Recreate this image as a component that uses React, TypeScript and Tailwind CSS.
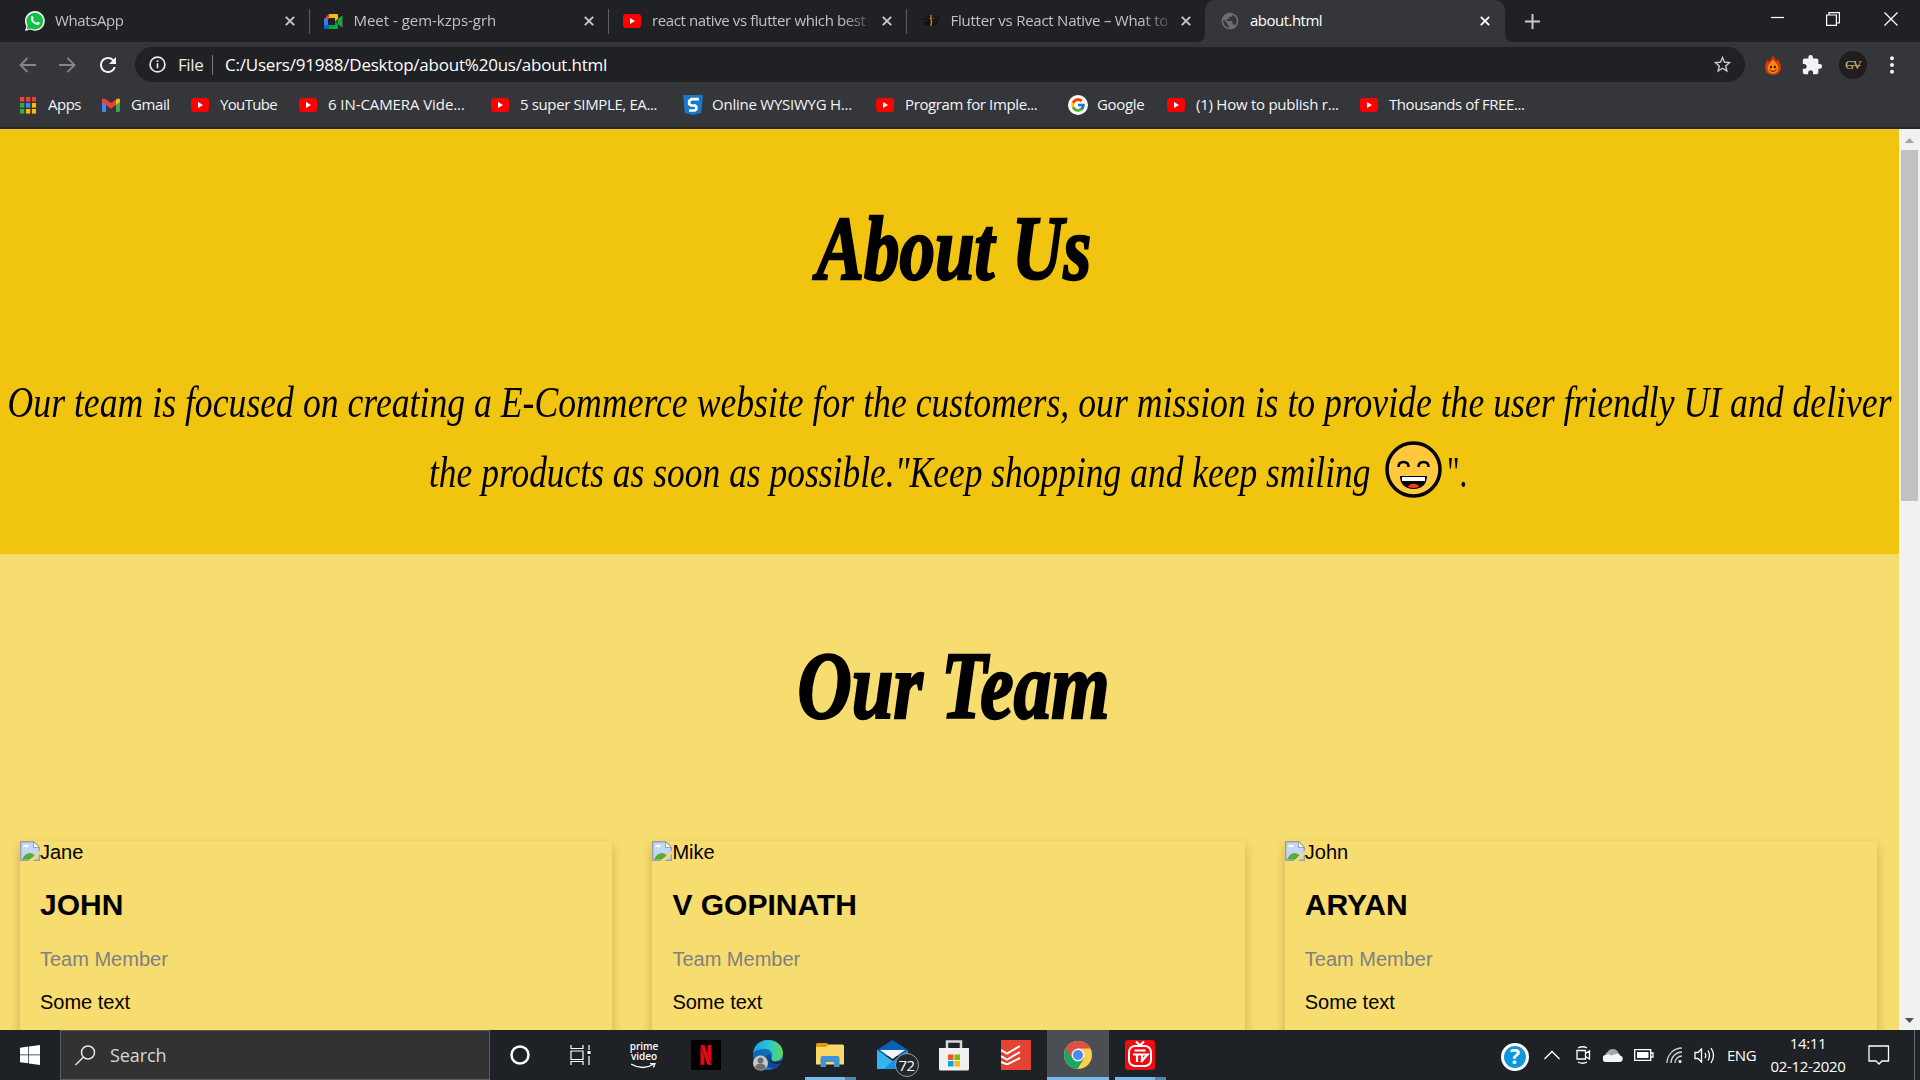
import React from "react";
import { FcGoogle } from "react-icons/fc";
import { SiNetflix } from "react-icons/si";
import { MdExtension, MdPublic, MdRefresh, MdStarBorder } from "react-icons/md";

const UI = "font-['Open_Sans','Noto_Sans',sans-serif]";

function YouTube() {
  return (
    <svg width="18" height="14" viewBox="0 0 18 14">
      <rect width="18" height="14" rx="3" fill="#f00" />
      <path d="M7 4l5 3-5 3z" fill="#fff" />
    </svg>
  );
}

function WhatsApp() {
  return (
    <svg width="20" height="20" viewBox="0 0 20 20">
      <path d="M0 20l1.400-5A9.900 9.900 0 1 1 5.200 18.600z" fill="#f4f4f4" />
      <path d="M1.800 18.200l1-3.600a8.300 8.300 0 1 1 3 2.800z" fill="#12c143" />
      <path d="M6.400 5.400c.8-.8 1.300-.5 1.600.3l.6 1.400c.1.600-.7 1-.7 1.400.7 1.500 2 2.600 3.400 3.200.6 0 .9-1.200 1.500-1l1.700.9c.6.300 0 1.900-.9 2.200-1.300.6-3.400-.2-5.200-1.800C6.300 10.200 5 7.700 6.400 5.400z" fill="#fff" />
    </svg>
  );
}

function Meet() {
  return (
    <svg width="19" height="15" viewBox="0 0 19 15">
      <path d="M5 0h8a1 1 0 0 1 1 1v4l-3 2.500V4H5z" fill="#ffba00" />
      <path d="M0 5l5-5v5z" fill="#ea4335" />
      <path d="M0 5h4v6H0z" fill="#2684fc" />
      <path d="M0 11h4.500v4H1.500A1.500 1.500 0 0 1 0 13.500z" fill="#0066da" />
      <path d="M4.500 11H11V7.500l3 3V14a1 1 0 0 1-1 1H4.500z" fill="#00ac47" />
      <path d="M11 7.500L17.500 2q1-.5 1 .7v9.600q0 1.200-1 .7z" fill="#2f9b48" />
      <path d="M11 7.500l3-2.500v5z" fill="#00662c" />
    </svg>
  );
}

function FlutterBlog() {
  return (
    <svg width="16" height="14" viewBox="0 0 16 14">
      <path d="M0 3l7-1v9l-5 1zM9 2l7 1-2 8-5 1z" fill="#111" />
      <path d="M1 4h4M1 7h4M10 4h4M10 7h4" stroke="#3b2c16" />
      <path d="M8 1v5l.6 2-.6 4" stroke="#d68a16" strokeWidth="1.300" fill="none" />
      <path d="M6 4l2 2 3-2" stroke="#8a5b15" fill="none" />
    </svg>
  );
}

function TabClose({ bright = false }: { bright?: boolean }) {
  return (
    <svg width="10" height="10" viewBox="0 0 10 10" className={bright ? "text-white" : "text-[#c6c9cd]"}>
      <path d="M.8.8l8.400 8.400M9.200.8L.8 9.200" stroke="currentColor" strokeWidth="1.900" />
    </svg>
  );
}

function Tab({ icon, title, tracking = "", last = false }: { icon: React.ReactNode; title: string; tracking?: string; last?: boolean }) {
  return (
    <div className="flex h-full w-[298.500px] shrink-0 items-center">
      <div className="flex w-5 shrink-0 items-center justify-center">{icon}</div>
      <div className={`-mt-px ml-[10px] w-[216px] text-[15px] whitespace-nowrap text-[#bfc3c8] [mask-image:linear-gradient(to_right,black_190px,transparent_226px)] ${tracking}`}>{title}</div>
      <div className="ml-[14px] w-[10px]"><TabClose /></div>
      <div className={last ? "hidden" : "ml-[14px] h-[25px] w-px bg-[#5a5d61]"} />
    </div>
  );
}

function TabStrip() {
  return (
    <div className="flex h-[42px] bg-[#202124]">
      <div className="flex w-[1205px] shrink-0 pl-[25px]">
        <Tab icon={<WhatsApp />} title="WhatsApp" tracking="tracking-[-0.4px]" />
        <Tab icon={<Meet />} title="Meet - gem-kzps-grh" tracking="tracking-[-0.02px]" />
        <Tab icon={<YouTube />} title="react native vs flutter which best" tracking="tracking-[-0.38px]" />
        <Tab icon={<FlutterBlog />} title="Flutter vs React Native – What to" tracking="tracking-[-0.25px]" last />
      </div>
      <div className="relative flex w-[300px] shrink-0 items-center rounded-t-[10px] bg-[#35363a] pl-[15px] text-[#6b6e73]">
        <svg className="absolute bottom-0 -left-2" width="8" height="8"><path d="M8 0v8H0q8 0 8-8z" fill="#35363a" /></svg>
        <svg className="absolute -right-2 bottom-0" width="8" height="8"><path d="M0 0v8h8q-8 0-8-8z" fill="#35363a" /></svg>
        <MdPublic size={20} />
        <div className="-mt-px ml-[10px] w-[230px] text-[15px] tracking-[-0.52px] whitespace-nowrap text-white">about.html</div>
        <TabClose bright />
      </div>
      <div className="flex grow items-center justify-between pr-[22px] pl-5">
        <svg width="15" height="15" viewBox="0 0 15 15"><path d="M7.500 0v15M0 7.500h15" stroke="#c6c9cd" strokeWidth="2" /></svg>
        <div className="mb-[5px] flex items-center">
          <svg className="-mt-[2px]" width="13" height="13"><path d="M0 6.500h13" stroke="#fff" strokeWidth="1.200" /></svg>
          <svg className="ml-[42px]" width="14" height="14" viewBox="0 0 14 14" fill="none" stroke="#fff" strokeWidth="1.200"><path d="M.6 3h9.800v10.400H.6zM3 3V.6h10.400V11H10.500" /></svg>
          <svg className="ml-[44px]" width="14" height="14" viewBox="0 0 14 14"><path d="M.5.5l13 13M13.500.5l-13 13" stroke="#fff" strokeWidth="1.300" /></svg>
        </div>
      </div>
    </div>
  );
}

function Arrow({ flip = false }: { flip?: boolean }) {
  return (
    <svg className={flip ? "-scale-x-100" : ""} width="17" height="16" viewBox="0 0 17 16" fill="none" stroke="#85878a" strokeWidth="1.800">
      <path d="M17 8H1.500M8.500 1l-7 7 7 7" />
    </svg>
  );
}

function Toolbar() {
  return (
    <div className="flex h-[45px] items-center bg-[#35363a] pl-[19px]">
      <Arrow />
      <div className="ml-[23px]"><Arrow flip /></div>
      <div className="ml-[20px] text-[#f1f3f4]"><MdRefresh size={24} /></div>
      <div className="ml-[15px] flex h-[35px] w-[1610px] items-center rounded-full bg-[#202124] pl-[14px]">
        <svg width="17" height="17" viewBox="0 0 17 17" fill="none" stroke="#e8eaed" strokeWidth="1.700">
          <circle cx="8.500" cy="8.500" r="7.400" /><path d="M8.500 7.200v5M8.500 4.200v1.800" />
        </svg>
        <span className="ml-[12px] w-[34px] text-[17px] tracking-[-0.4px] text-[#e8eaed]">File</span>
        <div className="h-5 w-px bg-[#77797d]" />
        <span className="ml-[12px] grow text-[17px] tracking-[-0.22px] text-white">C:/Users/91988/Desktop/about%20us/about.html</span>
        <div className="mr-[12px] text-[#c8cacd]"><MdStarBorder size={21} /></div>
      </div>
      <svg className="ml-[19px]" width="18" height="20" viewBox="0 0 18 20">
        <path d="M9 0c1 3 3 4 3 6l2-2c1 3 3 5 3 9 0 4-4 7-8 7s-8-3-8-7c0-4 1-6 3-9l1 3c2-2 3-4 4-7z" fill="#e3300b" />
        <path d="M9 5q5 4 5.500 8a5.500 5.500 0 0 1-11 0Q4 9 9 5z" fill="#f58a0b" />
        <path d="M5.500 14.500q3.500 4 7 0" stroke="#4a1a05" fill="none" /><circle cx="7" cy="12" r="1.200" fill="#4a1a05" /><circle cx="11" cy="12" r="1.200" fill="#4a1a05" />
      </svg>
      <div className="ml-[19px] text-[#f1f3f4]"><MdExtension size={22} /></div>
      <div className="ml-[16px] flex size-7 items-center justify-center rounded-full bg-[#211c1d] font-['Liberation_Serif',serif] text-[12px] tracking-[-1px] text-[#d5c8a8] line-through decoration-[#b59545]">GV</div>
      <svg className="ml-[22px]" width="6" height="18" viewBox="0 0 6 18" fill="#f1f3f4"><circle cx="3" cy="2.200" r="2" /><circle cx="3" cy="9" r="2" /><circle cx="3" cy="15.800" r="2" /></svg>
    </div>
  );
}

function AppsIcon() {
  const c = ["#ea4335", "#ea4335", "#ea4335", "#34a853", "#4285f4", "#fbbc05", "#34a853", "#fbbc05", "#fbbc05"];
  return (
    <svg width="16" height="17" viewBox="0 0 16 17">
      {c.map((f, i) => <rect key={i} x={(i % 3) * 6} y={Math.floor(i / 3) * 6} width="4.300" height="4.600" fill={f} />)}
    </svg>
  );
}

function GmailIcon() {
  return (
    <svg width="18" height="14" viewBox="0 0 18 14">
      <path d="M0 3h4v11H1.200A1.200 1.200 0 0 1 0 12.800z" fill="#4285f4" />
      <path d="M14 3h4v9.800a1.200 1.200 0 0 1-1.200 1.200H14z" fill="#34a853" />
      <path d="M14 1.500C16 0 18 0 18 2.500V4l-4 3z" fill="#fbbc04" />
      <path d="M0 2.500C0 0 2 0 4 1.500L9 5l5-3.500V7l-5 3.700L4 7 0 4z" fill="#ea4335" />
    </svg>
  );
}

function SIcon() {
  return (
    <svg width="20" height="20" viewBox="0 0 20 20">
      <path d="M0 0h20l-1.800 18L10 20l-8.200-2z" fill="#1878c9" />
      <path d="M14.500 5.500V4.200H8.500L6.200 6v3l2 1.500h4l1 1v2.800l-1.500 1.200H6" stroke="#fff" strokeWidth="2.700" fill="none" />
    </svg>
  );
}

function Bookmark({ icon, label, width, cls = "" }: { icon: React.ReactNode; label: string; width: string; cls?: string }) {
  return (
    <div className={`flex shrink-0 items-center ${width}`}>
      <div className="flex w-[18px] items-center justify-center">{icon}</div>
      <span className={`-mt-[2px] ml-[11px] text-[15px] whitespace-nowrap text-[#f3f4f5] ${cls}`}>{label}</span>
    </div>
  );
}

function Bookmarks() {
  return (
    <div className="flex h-[42px] items-center border-b-2 border-[#27282b] bg-[#35363a] pb-1 pl-[19px]">
      <Bookmark width="w-[83px]" icon={<AppsIcon />} label="Apps" cls="tracking-[-0.5px]" />
      <Bookmark width="w-[89px]" icon={<GmailIcon />} label="Gmail" cls="tracking-[-0.4px]" />
      <Bookmark width="w-[108px]" icon={<YouTube />} label="YouTube" cls="tracking-[-0.65px]" />
      <Bookmark width="w-[192px]" icon={<YouTube />} label="6 IN-CAMERA Vide..." cls="tracking-[-0.08px]" />
      <Bookmark width="w-[192px]" icon={<YouTube />} label="5 super SIMPLE, EA..." cls="tracking-[-0.37px]" />
      <Bookmark width="w-[193px]" icon={<div className="ml-px shrink-0"><SIcon /></div>} label="Online WYSIWYG H..." cls="tracking-[-0.24px]" />
      <Bookmark width="w-[192px]" icon={<YouTube />} label="Program for Imple..." cls="tracking-[-0.38px]" />
      <Bookmark width="w-[99px]" icon={<div className="ml-px shrink-0 rounded-full bg-white p-[2px]"><FcGoogle size={16} /></div>} label="Google" cls="tracking-[-0.35px]" />
      <Bookmark width="w-[193px]" icon={<YouTube />} label="(1) How to publish r..." cls="tracking-[-0.25px]" />
      <Bookmark width="w-[180px]" icon={<YouTube />} label="Thousands of FREE..." cls="tracking-[-0.43px]" />
    </div>
  );
}

function Smile() {
  return (
    <svg width="57" height="57" viewBox="0 0 57 57">
      <circle cx="28.500" cy="28.500" r="26.500" fill="#ffc83d" stroke="#000" strokeWidth="3.500" />
      <path d="M13.500 26q0-5 5-5t5 5M33.500 26q0-5 5-5t5 5" stroke="#000" strokeWidth="2.500" fill="none" />
      <path d="M15 35h27c0 8-5 13-13.500 13S15 43 15 35z" fill="#000" />
      <path d="M17 36h23v4H17z" fill="#fff" />
      <path d="M22.500 45.500q6-6 12 0-6 3-12 0z" fill="#f03a17" />
    </svg>
  );
}

function BrokenImage() {
  return (
    <svg width="20" height="20" viewBox="0 0 20 20">
      <path d="M.7.7h13l5.600 5.600v13H.7z" fill="#c5d7f5" stroke="#9b9fa6" strokeWidth="1.400" />
      <path d="M2 18.500q4-8 10-6l3 2-4 4z" fill="#58ab3a" />
      <path d="M3 6q1-3 3-2 2-1 3 2z" fill="#fff" />
      <path d="M13.500.7v5.800h5.800z" fill="#fff" stroke="#9b9fa6" />
      <path d="M8.500 20L20 9.500V13l-7 7z" fill="#f7dc6f" />
    </svg>
  );
}

function Card({ alt, name }: { alt: string; name: string }) {
  return (
    <div className="h-[260px] shadow-[0_5px_10px_0_rgba(0,0,0,0.2)]">
      <div className="flex h-[23px] items-start"><BrokenImage /><span className="leading-[23px]">{alt}</span></div>
      <div className="px-5 leading-[23px]">
        <h2 className="mt-[23px] text-[30px] leading-[35px] font-bold">{name}</h2>
        <p className="mt-[26px] text-[#808080]">Team Member</p>
        <p className="mt-5">Some text</p>
      </div>
    </div>
  );
}

const SCRIPT = "font-['Liberation_Serif',serif] italic";

function Page() {
  return (
    <div className="flex h-[901px] overflow-hidden">
      <div className="w-[1899px] shrink-0 bg-[#f7dc6f] font-['Liberation_Sans',Arial,sans-serif] text-[20px] text-black">
        <section className={`flex h-[425px] flex-col items-center bg-[#f1c40f] ${SCRIPT}`}>
          <h1 className="mt-[70px] ml-[8px] h-[100px] scale-x-[.79] text-[90px] leading-[100px] font-bold whitespace-nowrap [-webkit-text-stroke:2.500px_black]">About Us</h1>
          <p className="mt-[69px] flex h-[70px] scale-x-[.811] items-center text-[44px] whitespace-nowrap">
            Our team is focused on creating a E-Commerce website for the customers, our mission is to provide the user friendly UI and deliver
          </p>
          <div className="flex h-[70px] w-[1042px] items-center text-[44px] whitespace-nowrap">
            <span className="w-[956px] origin-left scale-x-[.806]">the products as soon as possible."Keep shopping and keep smiling</span>
            <div className="-mt-[7px] flex shrink-0 items-center"><Smile /><span className="mt-[7px] ml-[5px] origin-left scale-x-[.7] not-italic">".</span></div>
          </div>
        </section>
        <section>
          <h1 className={`mt-[82px] ml-[8px] h-[100px] origin-center scale-x-[.79] text-center text-[95px] leading-[100px] font-bold [-webkit-text-stroke:2.500px_black] ${SCRIPT}`}>Our Team</h1>
          <div className="mt-[105px] grid grid-cols-[repeat(3,632.400px)]">
            <div className="px-5"><Card alt="Jane" name="JOHN" /></div>
            <div className="px-5"><Card alt="Mike" name="V GOPINATH" /></div>
            <div className="px-5"><Card alt="John" name="ARYAN" /></div>
          </div>
        </section>
      </div>
      <div className="flex w-[21px] flex-col items-center bg-[#f1f1f1]">
        <svg width="21" height="21"><path d="M6 14l4.500-5 4.500 5z" fill="#a3a3a3" /></svg>
        <div className="h-[351px] w-[17px] bg-[#c1c1c1]" />
        <svg className="mt-auto" width="21" height="21"><path d="M6 9l4.500 5 4.500-5z" fill="#505050" /></svg>
      </div>
    </div>
  );
}

function EdgeIcon() {
  return (
    <svg width="32" height="32" viewBox="0 0 32 32">
      <defs>
        <linearGradient id="e1" x1="0" x2="1"><stop stopColor="#1a9fe0" /><stop offset=".5" stopColor="#28c4dc" /><stop offset="1" stopColor="#62d84e" /></linearGradient>
        <linearGradient id="e2" x1="0" x2="1" y2="1"><stop stopColor="#0c59a4" /><stop offset="1" stopColor="#1b84d4" /></linearGradient>
      </defs>
      <circle cx="16" cy="16" r="15" fill="url(#e2)" />
      <path d="M1 14C2 6 8 1 16 1c9 0 15 6 15 13 0 5-4 8-8 8-3 0-4.500-1.500-3.500-3 1.500-2 1-9-6.500-9C7 10 3 12 1 14z" fill="url(#e1)" />
      <path d="M19 20c-2 4 5 6 11 2-1.500 4-4 6-7 7.500C16 30 12 25 13 20c.5-3 2-4 4-5 2 1 3 3 2 5z" fill="#0b4b94" />
      <path d="M19.500 19.500c-1.500 3 4 5 12 1l-1.500 3c-6 3-12 1-12-3z" fill="#20252b" />
      <circle cx="8.500" cy="24" r="7.500" fill="#c9c9c9" /><circle cx="8.500" cy="21.500" r="3" fill="#6d6d6d" />
      <path d="M3 28.500q1-4 5.500-4t5.500 4q-5.500 5-11 0z" fill="#6d6d6d" />
    </svg>
  );
}

function FolderIcon() {
  return (
    <svg width="28" height="24" viewBox="0 0 28 24">
      <path d="M0 1.500Q0 0 1.500 0H11l2 3-2 3H0z" fill="#dd9a0d" />
      <path d="M0 4h10l2.500-2.500H26.500A1.500 1.500 0 0 1 28 3v18.500H0z" fill="#fed867" />
      <path d="M4.500 24V15a2 2 0 0 1 2-2h15a2 2 0 0 1 2 2v9H18v-5h-8v5z" fill="#3f93d6" />
    </svg>
  );
}

function MailIcon() {
  return (
    <div className="relative -mt-px">
      <svg width="31" height="29" viewBox="0 0 31 29">
        <path d="M0 10L15.500 0 31 10v6H0z" fill="#0b61b4" />
        <path d="M0 10l15.500 11L31 10v19H0z" fill="#1c93dc" /><path d="M0 10l15.500 11L7 29H0z" fill="#36b4ee" />
        <path d="M3 10h25L15.500 19z" fill="#f5f5f5" />
      </svg>
      <div className="absolute top-[13px] left-[18px] flex size-6 items-center justify-center rounded-full border border-[#9a9da1] bg-[#22272c] text-[15px] tracking-[-0.5px] text-white">72</div>
    </div>
  );
}

function StoreIcon() {
  return (
    <svg width="30" height="31" viewBox="0 0 30 31">
      <path d="M8 9V1.500h14V9" fill="none" stroke="#d8d8d8" strokeWidth="2.500" />
      <path d="M0 8h30v21a1.500 1.500 0 0 1-1.500 1.500h-27A1.500 1.500 0 0 1 0 29z" fill="#f0f0f0" />
      <path d="M9 14.500h5.500V20H9z" fill="#f25022" /><path d="M15.500 14.500H21V20h-5.500z" fill="#7fba00" />
      <path d="M9 21h5.500v5.500H9z" fill="#00a4ef" /><path d="M15.500 21H21v5.500h-5.500z" fill="#ffb900" />
    </svg>
  );
}

function ChromeIcon() {
  return (
    <svg width="28" height="28" viewBox="0 0 28 28">
      <circle cx="14" cy="14" r="14" fill="#fdd14b" />
      <path d="M14 14L1.900 7A14 14 0 0 0 13.500 28L20 17.500z" fill="#1da362" />
      <path d="M1.900 7A14 14 0 0 1 26.300 7.500H14L8 17.500z" fill="#dd5145" />
      <circle cx="14" cy="14" r="6.500" fill="#f4f4f4" /><circle cx="14" cy="14" r="5" fill="#4a8af4" />
    </svg>
  );
}

function Slot({ children, cls = "", bar = "" }: { children: React.ReactNode; cls?: string; bar?: string }) {
  return (
    <div className={`relative flex h-full w-[62px] shrink-0 items-center justify-center ${cls}`}>
      {children}
      {bar === "split" && <div className="absolute bottom-0 left-[6px] flex h-[3px] w-[51px]"><div className="w-[40px] bg-[#76b9ed]" /><div className="grow bg-[#5587ae]" /></div>}
      {bar === "full" && <div className="absolute bottom-0 left-0 h-[3px] w-full bg-[#76b9ed]" />}
    </div>
  );
}

function Tray() {
  const s = { fill: "none", stroke: "#fff", strokeWidth: 1.3 };
  return (
    <div className="ml-auto flex h-full items-center text-white">
      <div className="mt-[3px] flex size-7 items-center justify-center rounded-full border-[3px] border-white bg-[#0d98dc] text-[21px] font-bold">?</div>
      <svg className="ml-[15px]" width="16" height="10" {...s}><path d="M.5 9L8 1.500 15.500 9" /></svg>
      <svg className="ml-4" width="15" height="18" viewBox="0 0 15 18" {...s}><path d="M1 4.500h8.500v8.500H1zM9.500 7.500l4-2.500v8l-4-2.500M2 2q5-2.500 9 0M2 16q5 2.500 9 0" /></svg>
      <svg className="ml-[12px]" width="20" height="14" viewBox="0 0 20 14"><path d="M4 11A4 4 0 0 1 4.500 4 6 6 0 0 1 15 4l3 5z" fill="#a5a7aa" /><path d="M3 14a3.500 3.500 0 0 1 0-7q3-1.500 5 .5L13 6q3-1 4 1.500a3.300 3.300 0 0 1 0 6.500z" fill="#f5f5f5" /></svg>
      <svg className="ml-[11px]" width="20" height="12" viewBox="0 0 20 12" {...s}><path d="M.7.7h16v10.600H.7zM17 4h2v4h-2" /><path d="M3 3h11.500v6H3z" fill="#fff" stroke="none" /></svg>
      <svg className="ml-[12px]" width="17" height="17" viewBox="0 0 17 17" fill="none" stroke="#d0d2d4" strokeWidth="1.300"><path d="M1 16A15 15 0 0 1 16 1M5 16A11 11 0 0 1 16 5M9 16a7 7 0 0 1 7-7" /><circle cx="14" cy="14.500" r="1.500" fill="#fff" stroke="none" /></svg>
      <svg className="ml-[11px]" width="21" height="17" viewBox="0 0 21 17" {...s}><path d="M1 5.500h3L7.500 2v13L4 11.500H1zM11 6q1.500 2.500 0 5M14 3.500q3 5 0 10M17 1q5 7.500 0 15" /></svg>
      <span className="ml-[12px] w-[29px] text-[15px] tracking-[-0.5px]">ENG</span>
      <div className="ml-[4px] flex w-[96px] flex-col items-center text-[15px] leading-[23px] tracking-[-0.35px]"><span>14:11</span><span>02-12-2020</span></div>
      <svg className="ml-[12px]" width="22" height="20" viewBox="0 0 22 20" {...s}><path d="M1 1h19.500v15h-6.500l-3 3-3-3H1z" /></svg>
      <div className="mr-[5px] ml-[24px] h-full w-px bg-[#6a6d70]" />
    </div>
  );
}

function Taskbar() {
  return (
    <div className="flex h-[50px] items-center bg-[#1e2227]">
      <div className="flex w-[60px] shrink-0 justify-center">
        <svg width="20" height="20" viewBox="0 0 20 20" fill="#fff"><path d="M0 2.800L8.300 1.600v8H0zM9 1.500L20 0v9.600H9zM0 10.300h8.300v8L0 17.200zM9 10.300h11V20L9 18.400z" /></svg>
      </div>
      <div className="flex h-full w-[430px] shrink-0 items-center border border-[#5c5c5c] bg-[#323232] pl-[14px]">
        <svg width="21" height="21" viewBox="0 0 21 21" fill="none" stroke="#e6e6e6" strokeWidth="1.500"><circle cx="13" cy="7.500" r="6.500" /><path d="M8.500 12L.5 20" /></svg>
        <span className="ml-[14px] text-[18px] tracking-[-0.1px] text-[#d6d6d6]">Search</span>
      </div>
      <div className="flex w-[60px] shrink-0 justify-center"><svg width="20" height="20"><circle cx="10" cy="10" r="8.500" fill="none" stroke="#fff" strokeWidth="2.500" /></svg></div>
      <Slot><svg width="22" height="20" viewBox="0 0 22 20" fill="none" stroke="#fff" strokeWidth="1.200"><path d="M1 0v3.500h12V0M1 6h12v8.500H1zM1 20v-3.500h12V20M19 0v5M19 11v9" /><path d="M17.500 6h3v3h-3z" fill="#fff" stroke="none" /></svg></Slot>
      <Slot cls="ml-px">
        <div className="flex flex-col items-center text-[10px] font-semibold text-white">
          <span className="h-[9px] leading-[9px]">prime</span><span className="mt-px h-[9px] leading-[9px]">video</span>
          <svg className="mt-[2px]" width="25" height="6"><path d="M0 1q12 7 23 0M19 .6h5l-1.500 4" fill="none" stroke="#fff" strokeWidth="1.300" /></svg>
        </div>
      </Slot>
      <Slot><div className="flex size-[30px] items-center justify-center bg-black text-[#e50914]"><SiNetflix size={20} /></div></Slot>
      <Slot><EdgeIcon /></Slot>
      <Slot bar="split"><FolderIcon /></Slot>
      <Slot><MailIcon /></Slot>
      <Slot><StoreIcon /></Slot>
      <Slot>
        <div className="flex size-[30px] items-center bg-[#e44332]">
          <svg width="20" height="20" viewBox="0 0 20 20" fill="none" stroke="#fff" strokeWidth="2"><path d="M0 5l6 3.500L19 1M0 11l6 3.500L19 7M0 17l6 2.500L19 13" /></svg>
        </div>
      </Slot>
      <Slot cls="bg-[#4b4e52]" bar="full"><ChromeIcon /></Slot>
      <Slot bar="split">
        <svg width="30" height="30" viewBox="0 0 30 30"><rect width="30" height="30" rx="3" fill="#ec0c12" />
          <g fill="none" stroke="#fff" strokeWidth="2"><rect x="4" y="6" width="22" height="20" rx="6" /><path d="M11 1.500l4 4 4-4M9.500 10.500h11M8 14.500h14.500l-6.500 7.500M12 14.500V22M17 15v5" strokeWidth="2.200" /></g></svg>
      </Slot>
      <Tray />
    </div>
  );
}

export default function App() {
  return (
    <div className={`h-[1080px] w-[1920px] overflow-hidden ${UI}`}>
      <TabStrip />
      <Toolbar />
      <Bookmarks />
      <Page />
      <Taskbar />
    </div>
  );
}
